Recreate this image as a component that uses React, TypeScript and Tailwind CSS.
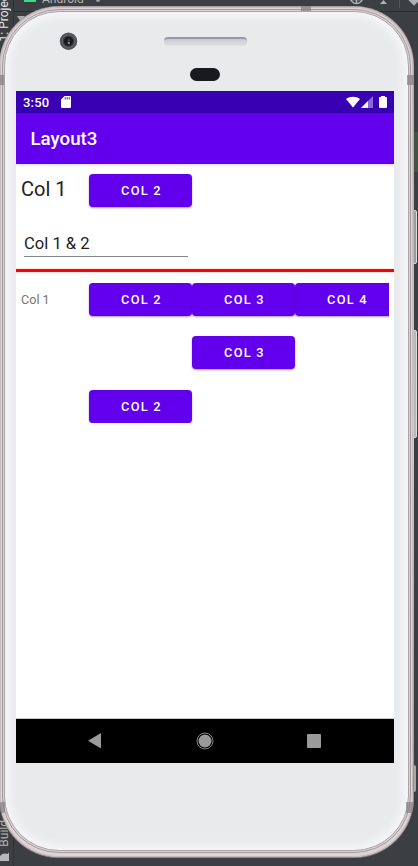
import type { ReactNode } from "react";

function MaterialButton({ children, clipped = false }: { children: ReactNode; clipped?: boolean }) {
  return (
    <button
      className={`flex h-[33px] w-[103px] shrink-0 items-center justify-center bg-[#6200ee] pl-[2px] pt-[2px] text-[12.8px] font-medium leading-none tracking-[1.25px] text-white shadow-[0_1px_2px_rgba(40,0,110,0.4)] ${clipped ? "rounded-l-[4px]" : "rounded-[4px]"}`}
    >
      {children}
    </button>
  );
}

function StatusBar() {
  return (
    <div className="flex h-[22px] items-center bg-[#3700b3] pl-[7px] pr-[7px] text-white">
      <span className="w-[38px] text-[13px] font-medium leading-none tracking-[0.2px]">3:50</span>
      <svg width="10" height="12" viewBox="0 0 10 12" className="-mt-px">
        <path d="M3.5 0H9a1 1 0 0 1 1 1v10a1 1 0 0 1-1 1H1a1 1 0 0 1-1-1V3.5Z" fill="white" />
        <path d="M4.2 1.2v2.3M6.2 1.2v2.3M8.2 1.2v2.3" stroke="#3700b3" strokeWidth="0.9" />
      </svg>
      <svg width="14" height="12" viewBox="0 0 14 12" className="ml-auto">
        <path d="M0 2.9C4 0 10 0 14 2.9L7 11.6Z" fill="white" />
      </svg>
      <svg width="12" height="12" viewBox="0 0 12 12" className="ml-px">
        <path d="M0 12 12 0v12Z" fill="#8b6bd2" />
        <path d="M0 12 7 5v7Z" fill="white" />
      </svg>
      <svg width="8" height="12" viewBox="0 0 8 12" className="ml-[6px]">
        <path d="M2 1V0h4v1h1a1 1 0 0 1 1 1v9a1 1 0 0 1-1 1H1a1 1 0 0 1-1-1V2a1 1 0 0 1 1-1Z" fill="white" />
      </svg>
    </div>
  );
}

function Screen() {
  return (
    <div className="flex h-[672px] w-[378px] flex-col overflow-hidden bg-white">
      <StatusBar />
      <div className="z-10 flex h-[51px] shrink-0 items-center bg-[#6200ee] pl-[14.5px] pt-[2px] text-[18.7px] font-medium leading-none text-white shadow-[0_1px_3px_rgba(0,0,0,0.18)]">
        Layout3
      </div>
      <div className="flex h-[105px] shrink-0 flex-col pl-[5px] pt-[10px]">
        <div className="flex h-[33px]">
          <span className="w-[68px] shrink-0 pt-[5px] text-[20px] leading-[21px] text-[#212121]">Col 1</span>
          <MaterialButton>COL 2</MaterialButton>
        </div>
        <div className="ml-[3px] mt-[26px] h-[24px] w-[164px] border-b border-[#858585] pt-px text-[16.6px] leading-[20px] text-[#212121]">
          Col 1 &amp; 2
        </div>
      </div>
      <div className="h-[3px] shrink-0 bg-[#ff0000] shadow-[0_0_1px_#ff0000]" />
      <div className="flex h-[151px] w-[373px] shrink-0 flex-col gap-[20.5px] overflow-hidden pl-[5px] pt-[10.5px]">
        <div className="flex h-[33px] shrink-0">
          <span className="w-[68px] shrink-0 pt-[8px] text-[12.6px] leading-[18px] text-[#757575]">Col 1</span>
          <MaterialButton>COL 2</MaterialButton>
          <MaterialButton>COL 3</MaterialButton>
          <MaterialButton clipped>COL 4</MaterialButton>
        </div>
        <div className="flex pl-[171px]">
          <MaterialButton>COL 3</MaterialButton>
        </div>
        <div className="flex pl-[68px]">
          <MaterialButton>COL 2</MaterialButton>
        </div>
      </div>
      <div className="mt-auto flex h-[45px] shrink-0 items-center border-t border-[#c8c8c8] bg-black pl-[72px]">
        <svg width="13" height="16" viewBox="0 0 13 16">
          <path d="M13 0v15.5L0 7.8Z" fill="#9a9a9a" />
        </svg>
        <svg width="18" height="18" viewBox="0 0 18 18" className="ml-[95px]">
          <circle cx="9" cy="9" r="8" fill="none" stroke="#858585" strokeWidth="1" />
          <circle cx="9" cy="9" r="6.5" fill="#9a9a9a" />
        </svg>
        <div className="ml-[93px] size-[14px] rounded-[1px] bg-[#9a9a9a]" />
      </div>
    </div>
  );
}

function Editor() {
  return (
    <div className="absolute inset-0 overflow-hidden bg-[#3c3f41]">
      <div className="absolute left-[14px] right-0 top-[11px] h-px bg-[#2b2b2b]" />
      <div className="absolute bottom-0 left-[13px] top-0 w-px bg-[#303335]" />
      <div className="absolute left-[24px] top-[-6px] h-[8px] w-[12px] bg-[#3ddc84]" />
      <span className="absolute left-[42px] top-[-8px] text-[12px] leading-[14px] text-[#b5b5b5]">Android</span>
      <span className="absolute left-[96px] top-[-1px] h-[3px] w-[4px] rounded-b-full bg-[#a0a0a0]" />
      <span className="absolute bottom-[825px] left-[-3px] rotate-180 whitespace-nowrap text-[12px] leading-[14px] text-[#e5e5e5] [writing-mode:vertical-rl]">1: Project</span>
      <span className="absolute bottom-[19px] left-[-3px] rotate-180 whitespace-nowrap text-[12px] leading-[14px] text-[#aeb1b3] [writing-mode:vertical-rl]">Build</span>
      <svg className="absolute left-[17px] top-[16px]" width="8" height="6" viewBox="0 0 8 6"><path d="M0 0h8L4 6Z" fill="#a7a9ab" /></svg>
      <svg className="absolute bottom-[5px] left-0" width="10" height="9" viewBox="0 0 10 9"><path d="M0 9V4C2 1 6 1 8 2L9 0v9Z" fill="#b6b8b9" /></svg>
      <svg className="absolute left-[349px] top-[-10px]" width="15" height="15" viewBox="0 0 15 15"><path d="M7.5 1v13M1 9.5h13" stroke="#aeb1b3" strokeWidth="1.4" /><circle cx="7.5" cy="7.5" r="6" fill="none" stroke="#aeb1b3" strokeWidth="1.5" /></svg>
      <svg className="absolute left-[380px] top-0" width="7" height="5" viewBox="0 0 7 5"><path d="M3.5 0 7 4H0Z" fill="#aeb1b3" /></svg>
      <div className="absolute left-[399px] top-0 h-[8px] w-px bg-[#555759]" />
      <div className="absolute left-[410px] top-[-4px] size-[8px] rotate-45 bg-[#aeb1b3]" />
      <div className="absolute left-[412px] top-[132px] h-[40px] w-[6px] bg-[#445145]" />
      <div className="absolute left-[412px] top-[210px] h-[54px] w-[5px] rounded-r-[2px] border border-[#dededb] bg-[#979e9c]" />
      <div className="absolute left-[412px] top-[330px] h-[108px] w-[5px] rounded-r-[2px] border border-[#dededb] bg-[#b5b8b6]" />
      <div className="absolute left-[412px] top-[765px] h-[27px] w-[4px] rounded-r-[2px] bg-[#a9a7a6]" />
    </div>
  );
}

export default function App() {
  return (
    <div className="relative h-[866px] w-[418px] overflow-hidden font-[Roboto,sans-serif]">
      <Editor />
      <div className="relative ml-[-1px] mt-[6px] h-[852px] w-[415px] overflow-hidden rounded-[60px] bg-linear-to-b from-[#aaa0a2] via-[#d2cacd] to-[#8e8587] p-px">
        <div className="h-full rounded-[59px] bg-[#ded4d7] p-[2px] pb-[4px] shadow-[inset_0_0_0_1px_#c5bcbe]">
          <div className="h-full rounded-[57px] border border-[#a39b9e] bg-[#d9d0d3] p-px">
            <div className="flex h-full flex-col items-start rounded-[55px] border border-[#aaa5a8] bg-[#e9eaec] pl-[11px] pt-[79px] shadow-[inset_0_0_10px_4px_#f8f8fa]">
              <Screen />
            </div>
          </div>
        </div>
        <div className="absolute left-[302px] top-0 h-[5px] w-[10px] bg-[#8b8487]/80" />
        <div className="absolute left-0 top-[69px] h-[10px] w-[5px] bg-[#858083]/70" />
        <div className="absolute right-0 top-[69px] h-[10px] w-[7px] bg-[#858083]/70" />
        <div className="absolute left-0 top-[796px] h-[11px] w-[6px] -skew-y-6 bg-[#858083]/70" />
        <div className="absolute right-0 top-[796px] h-[11px] w-[8px] bg-[#858083]/70" />
        <svg className="absolute left-[60px] top-[26px]" width="19" height="19" viewBox="0 0 19 19">
          <circle cx="9.5" cy="9.2" r="8.7" fill="#535457" />
          <circle cx="9.5" cy="9.2" r="6.2" fill="#3a3b3e" stroke="#77787b" strokeWidth="0.6" />
          <circle cx="9.5" cy="9.2" r="4.5" fill="#171a20" />
          <circle cx="9.8" cy="8.2" r="1.2" fill="#34465a" />
          <circle cx="9.8" cy="11" r="1.2" fill="#8c8a48" />
        </svg>
        <div className="absolute left-[165px] top-[31px] h-[9px] w-[83px] rounded-[4px] border-t-2 border-[#9298a4] bg-linear-to-b from-[#c9cbd1] to-[#dfe1e3]" />
        <div className="absolute left-[191px] top-[62px] h-[13px] w-[30px] rounded-full bg-[#191a1e]" />
      </div>
    </div>
  );
}
